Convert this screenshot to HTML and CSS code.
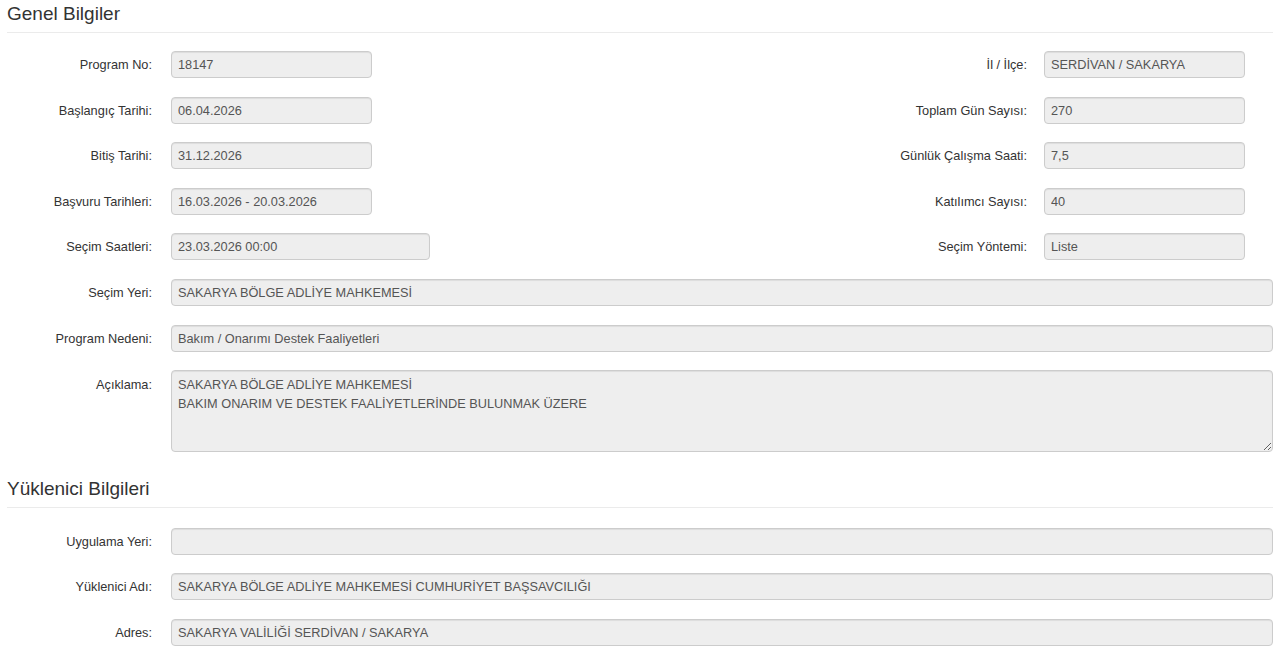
FILE: index.html
```html
<!DOCTYPE html>
<html lang="tr">
  <head>
    <meta charset="UTF-8" />
    <meta name="viewport" content="width=device-width, initial-scale=1.0" />
    <title>Program Detayı</title>
    <link rel="stylesheet" href="styles.css">
  </head>
  <body>
    <h4 class="section-title">Genel Bilgiler</h4>

    <div class="row pair">
      <div class="cell">
        <label>Program No:</label>
        <input class="field short" type="text" value="18147" readonly />
      </div>
      <div class="cell right">
        <label>İl / İlçe:</label>
        <input class="field short" type="text" value="SERDİVAN / SAKARYA" readonly />
      </div>
    </div>

    <div class="row pair">
      <div class="cell">
        <label>Başlangıç Tarihi:</label>
        <input class="field short" type="text" value="06.04.2026" readonly />
      </div>
      <div class="cell right">
        <label>Toplam Gün Sayısı:</label>
        <input class="field short" type="text" value="270" readonly />
      </div>
    </div>

    <div class="row pair">
      <div class="cell">
        <label>Bitiş Tarihi:</label>
        <input class="field short" type="text" value="31.12.2026" readonly />
      </div>
      <div class="cell right">
        <label>Günlük Çalışma Saati:</label>
        <input class="field short" type="text" value="7,5" readonly />
      </div>
    </div>

    <div class="row pair">
      <div class="cell">
        <label>Başvuru Tarihleri:</label>
        <input class="field short" type="text" value="16.03.2026 - 20.03.2026" readonly />
      </div>
      <div class="cell right">
        <label>Katılımcı Sayısı:</label>
        <input class="field short" type="text" value="40" readonly />
      </div>
    </div>

    <div class="row pair">
      <div class="cell">
        <label>Seçim Saatleri:</label>
        <input class="field medium" type="text" value="23.03.2026 00:00" readonly />
      </div>
      <div class="cell right">
        <label>Seçim Yöntemi:</label>
        <input class="field short" type="text" value="Liste" readonly />
      </div>
    </div>

    <div class="row">
      <label>Seçim Yeri:</label>
      <input class="field wide" type="text" value="SAKARYA BÖLGE ADLİYE MAHKEMESİ" readonly />
    </div>

    <div class="row">
      <label>Program Nedeni:</label>
      <input class="field wide" type="text" value="Bakım / Onarımı Destek Faaliyetleri" readonly />
    </div>

    <div class="row top">
      <label>Açıklama:</label>
      <textarea class="field wide area" readonly>SAKARYA BÖLGE ADLİYE MAHKEMESİ
BAKIM ONARIM VE DESTEK FAALİYETLERİNDE BULUNMAK ÜZERE</textarea>
    </div>

    <h4 class="section-title second">Yüklenici Bilgileri</h4>

    <div class="row">
      <label>Uygulama Yeri:</label>
      <input class="field wide" type="text" value="" readonly />
    </div>

    <div class="row">
      <label>Yüklenici Adı:</label>
      <input class="field wide" type="text" value="SAKARYA BÖLGE ADLİYE MAHKEMESİ CUMHURİYET BAŞSAVCILIĞI" readonly />
    </div>

    <div class="row">
      <label>Adres:</label>
      <input class="field wide" type="text" value="SAKARYA VALİLİĞİ SERDİVAN / SAKARYA" readonly />
    </div>
  </body>
</html>
```

FILE: styles.css
```css
body {
  font-family: "Liberation Sans", Arial, sans-serif;
  font-size: 12.75px;
  color: #333;
  margin: 0;
  padding: 0 7px;
  background-color: #fff;
}
.section-title {
  font-size: 19px;
  font-weight: normal;
  line-height: 22px;
  color: #333;
  margin: 0 0 18px;
  padding: 3px 0 7px;
  border-bottom: 1px solid #ebebeb;
}
.section-title.second {
  margin-top: 23px;
  margin-bottom: 19.5px;
}
.row {
  display: flex;
  align-items: center;
  margin-bottom: 18.6px;
}
.row.top {
  align-items: flex-start;
}
.row.top label {
  padding-top: 7px;
}
.row label {
  width: 145px;
  text-align: right;
  margin-right: 19px;
  color: #333;
}
.pair {
  justify-content: space-between;
}
.cell {
  display: flex;
  align-items: center;
}
.cell.right {
  margin-right: 28px;
}
.cell.right label {
  width: auto;
  margin-right: 17px;
}
.field {
  box-sizing: border-box;
  height: 27px;
  padding: 0 6px;
  font-family: "Liberation Sans", Arial, sans-serif;
  font-size: 12.75px;
  color: #555;
  background-color: #eee;
  border: 1px solid #ccc;
  border-radius: 4px;
  box-shadow: inset 0 1px 1px rgba(0, 0, 0, 0.075);
  outline: none;
}
.short {
  width: 201px;
}
.medium {
  width: 259px;
}
.wide {
  flex: 1;
}
.area {
  height: 82px;
  padding: 4px 6px;
  line-height: 19px;
  resize: vertical;
}
```
